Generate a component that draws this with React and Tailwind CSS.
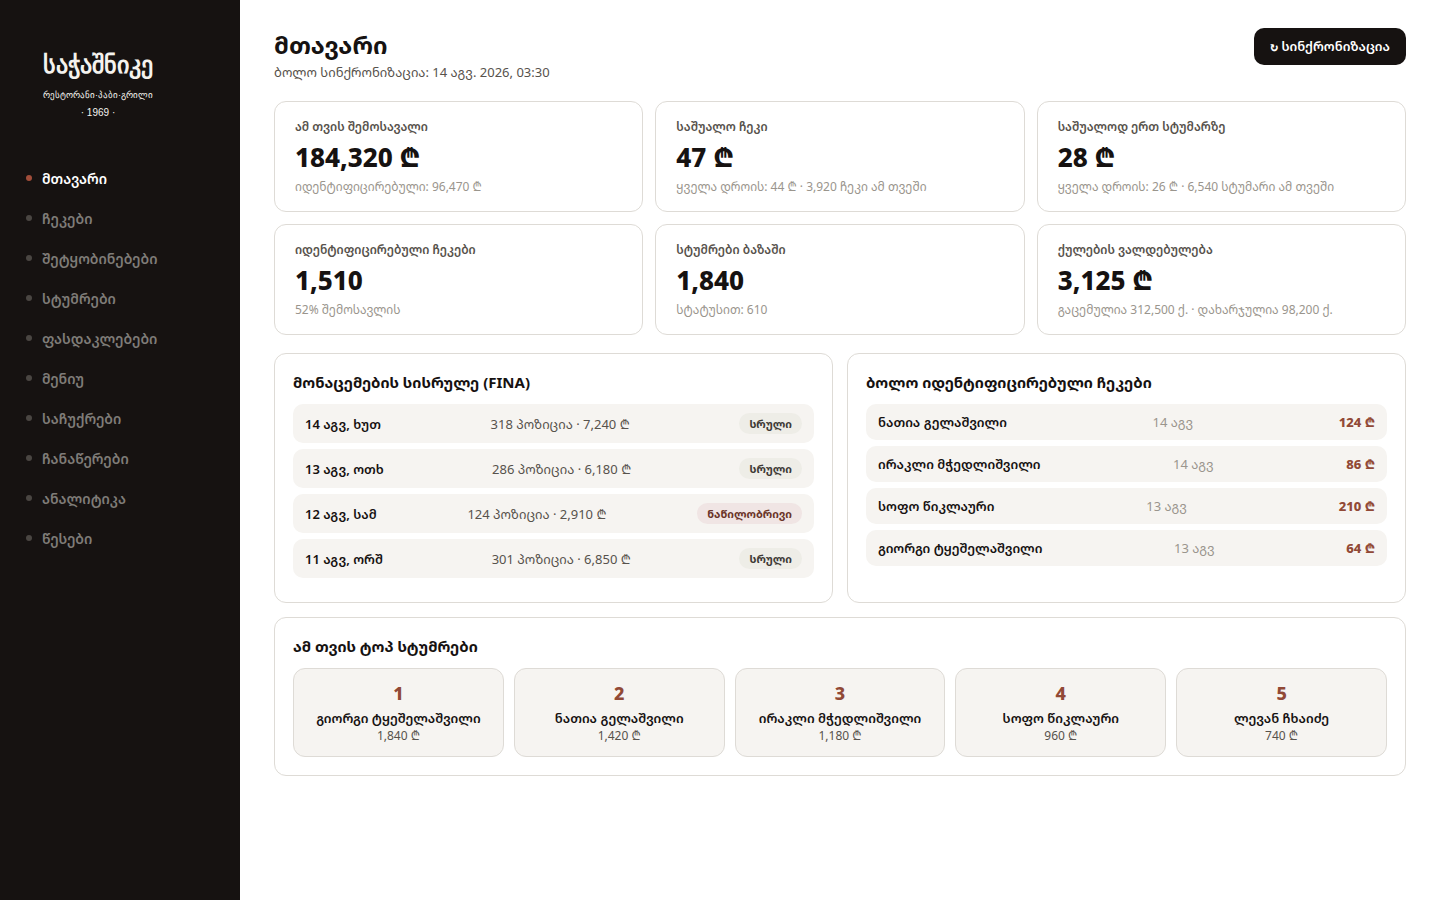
const nav = ["მთავარი", "ჩეკები", "შეტყობინებები", "სტუმრები", "ფასდაკლებები", "მენიუ", "საჩუქრები", "ჩანაწერები", "ანალიტიკა", "წესები"];

const stats = [
  ["ამ თვის შემოსავალი", "184,320 ₾", "იდენტიფიცირებული: 96,470 ₾"],
  ["საშუალო ჩეკი", "47 ₾", "ყველა დროის: 44 ₾ · 3,920 ჩეკი ამ თვეში"],
  ["საშუალოდ ერთ სტუმარზე", "28 ₾", "ყველა დროის: 26 ₾ · 6,540 სტუმარი ამ თვეში"],
  ["იდენტიფიცირებული ჩეკები", "1,510", "52% შემოსავლის"],
  ["სტუმრები ბაზაში", "1,840", "სტატუსით: 610"],
  ["ქულების ვალდებულება", "3,125 ₾", "გაცემულია 312,500 ქ. · დახარჯულია 98,200 ქ."],
];

const days = [
  ["14 აგვ, ხუთ", "318 პოზიცია · 7,240 ₾", true],
  ["13 აგვ, ოთხ", "286 პოზიცია · 6,180 ₾", true],
  ["12 აგვ, სამ", "124 პოზიცია · 2,910 ₾", false],
  ["11 აგვ, ორშ", "301 პოზიცია · 6,850 ₾", true],
];

const checks = [
  ["ნათია გელაშვილი", "14 აგვ", "124 ₾"],
  ["ირაკლი მჭედლიშვილი", "14 აგვ", "86 ₾"],
  ["სოფო წიკლაური", "13 აგვ", "210 ₾"],
  ["გიორგი ტყეშელაშვილი", "13 აგვ", "64 ₾"],
];

const guests = [
  ["გიორგი ტყეშელაშვილი", "1,840 ₾"],
  ["ნათია გელაშვილი", "1,420 ₾"],
  ["ირაკლი მჭედლიშვილი", "1,180 ₾"],
  ["სოფო წიკლაური", "960 ₾"],
  ["ლევან ჩხაიძე", "740 ₾"],
];

function Logo() {
  return (
    <div className="ml-7 flex w-[112px] flex-col items-center font-['Liberation_Sans',sans-serif] whitespace-nowrap text-[#f4f2ee]">
      <div className="text-[24px] leading-[42px] font-black">საჭაშნიკე</div>
      <div className="text-[9px] leading-[18px]">რესტორანი·პაბი·გრილი</div>
      <div className="text-[10px] leading-[18px]">· 1969 ·</div>
    </div>
  );
}

function Sidebar() {
  return (
    <aside className="w-60 shrink-0 bg-[#161211] px-3.5 pt-11">
      <Logo />
      <nav className="mt-9 flex flex-col">
        {nav.map((label, i) => (
          <a key={label} href="#" className={`flex h-10 items-center gap-2.5 px-3 text-sm leading-[21px] font-semibold ${i === 0 ? "text-white" : "text-[#7f7c78]"}`}>
            <span className={`size-1.5 rounded-full ${i === 0 ? "bg-[#a14d3a]" : "bg-[#4a4642]"}`} />
            {label}
          </a>
        ))}
      </nav>
    </aside>
  );
}

function Panel({ title, children }) {
  return (
    <section className="rounded-xl border border-[#dedbd6] p-[18px]">
      <h2 className="mb-3 text-[15px] leading-5 font-bold">{title}</h2>
      {children}
    </section>
  );
}

export default function App() {
  return (
    <div className="flex min-h-screen bg-white font-['Noto_Sans','Noto_Sans_Georgian',sans-serif] text-[#161211]">
      <Sidebar />
      <main className="min-w-0 flex-1 px-[34px] py-7">
        <header className="mb-[18px] flex items-start justify-between">
          <div>
            <h1 className="text-2xl leading-[33px] font-bold">მთავარი</h1>
            <p className="text-[13px] leading-[22px] text-[#57524c]">ბოლო სინქრონიზაცია: 14 აგვ. 2026, 03:30</p>
          </div>
          <button type="button" className="rounded-[10px] bg-[#161211] px-4 py-[9px] text-[13px] leading-[18px] font-semibold text-white">
            <span className="font-['DejaVu_Sans_Mono',monospace] font-bold">↻</span> სინქრონიზაცია
          </button>
        </header>

        <div className="grid grid-cols-3 gap-3">
          {stats.map(([label, value, note]) => (
            <div key={label} className="rounded-xl border border-[#dedbd6] px-5 py-4">
              <div className="text-xs leading-[18px] font-semibold text-[#57524c]">{label}</div>
              <div className="my-1 text-[26px] leading-[35px] font-extrabold">{value}</div>
              <div className="text-xs leading-4 text-[#9a958d]">{note}</div>
            </div>
          ))}
        </div>

        <div className="mt-[18px] grid grid-cols-2 gap-3.5">
          <Panel title="მონაცემების სისრულე (FINA)">
            <ul className="mb-1.5 flex flex-col gap-1.5">
              {days.map(([day, text, full]) => (
                <li key={day} className="flex items-center justify-between rounded-[10px] bg-[#f6f4f1] px-3 py-[9px] text-[13px] leading-[18px]">
                  <span className="font-semibold">{day}</span>
                  <span className="text-[#57524c]">{text}</span>
                  <span className={`rounded-full px-2.5 text-[11px] leading-[21px] font-bold ${full ? "bg-[#eeede7] text-[#3f3a36]" : "bg-[#f0e5e4] text-[#6b3529]"}`}>{full ? "სრული" : "ნაწილობრივი"}</span>
                </li>
              ))}
            </ul>
          </Panel>
          <Panel title="ბოლო იდენტიფიცირებული ჩეკები">
            <ul className="flex flex-col gap-1.5">
              {checks.map(([name, date, sum]) => (
                <li key={name} className="flex items-center justify-between rounded-[10px] bg-[#f6f4f1] px-3 py-[9px] text-[13px] leading-[18px]">
                  <span className="font-semibold">{name}</span>
                  <span className="text-[#9a958d]">{date}</span>
                  <span className="font-extrabold text-[#914936]">{sum}</span>
                </li>
              ))}
            </ul>
          </Panel>
        </div>

        <div className="mt-3.5">
          <Panel title="ამ თვის ტოპ სტუმრები">
            <ol className="grid grid-cols-5 gap-2.5">
              {guests.map(([name, sum], i) => (
                <li key={name} className="rounded-xl border border-[#dedbd6] bg-[#f6f4f1] p-3 text-center">
                  <div className="text-lg leading-[25px] font-extrabold text-[#914936]">{i + 1}</div>
                  <div className="mt-1 mb-0.5 text-[13px] leading-4 font-semibold">{name}</div>
                  <div className="text-xs leading-4 text-[#57524c]">{sum}</div>
                </li>
              ))}
            </ol>
          </Panel>
        </div>
      </main>
    </div>
  );
}
